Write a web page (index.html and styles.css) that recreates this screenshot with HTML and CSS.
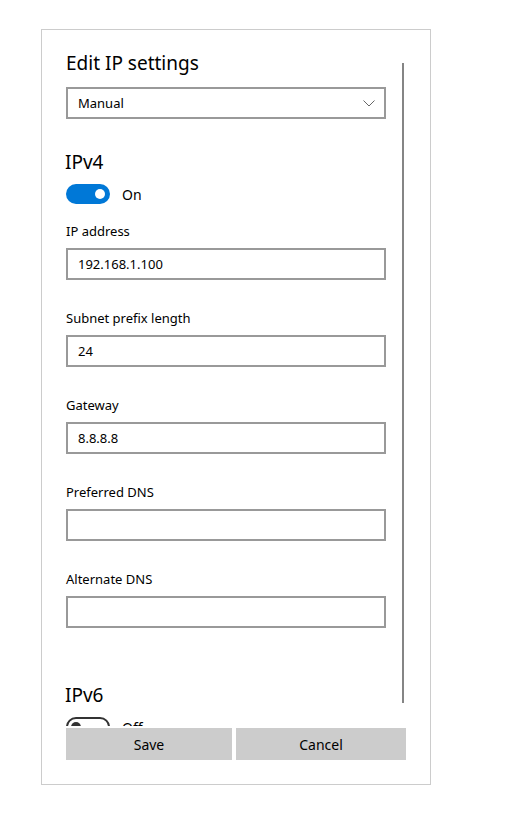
FILE: index.html
```html
<!DOCTYPE html>
<html>
<head>
<meta charset="utf-8">
<link rel="stylesheet" href="styles.css">
</head>
<body>
<div class="dialog">
  <div class="scroll">
    <div class="content">
      <h1 class="title">Edit IP settings</h1>
      <div class="select">
        <span>Manual</span>
        <svg class="chev" width="12" height="7" viewBox="0 0 12 7"><path d="M0.5 0.5 L6 6 L11.5 0.5" fill="none" stroke="#666" stroke-width="1"/></svg>
      </div>
      <h2 class="section">IPv4</h2>
      <div class="toggle-row">
        <span class="toggle on"><span class="knob"></span></span>
        <span class="toggle-label">On</span>
      </div>
      <div class="field">
        <label class="label">IP address</label>
        <div class="input">192.168.1.100</div>
      </div>
      <div class="field">
        <label class="label">Subnet prefix length</label>
        <div class="input">24</div>
      </div>
      <div class="field">
        <label class="label">Gateway</label>
        <div class="input">8.8.8.8</div>
      </div>
      <div class="field">
        <label class="label">Preferred DNS</label>
        <div class="input"></div>
      </div>
      <div class="field">
        <label class="label">Alternate DNS</label>
        <div class="input"></div>
      </div>
      <h2 class="section six">IPv6</h2>
      <div class="toggle-row">
        <span class="toggle off"><span class="knob"></span></span>
        <span class="toggle-label">Off</span>
      </div>
    </div>
    <div class="track"><div class="thumb"></div></div>
  </div>
  <div class="footer">
    <button class="btn save">Save</button>
    <button class="btn cancel">Cancel</button>
  </div>
</div>
</body>
</html>
```
FILE: styles.css
```css
* { box-sizing: border-box; }
html, body { margin: 0; padding: 0; background: #fff; }
body {
  font-family: "Noto Sans", "Open Sans", sans-serif;
  color: #000;
}
.dialog {
  margin: 29px 0 0 41px;
  width: 390px;
  height: 756px;
  border: 1px solid #cccccc;
  display: flex;
  flex-direction: column;
}
.scroll {
  height: 696px;
  overflow: hidden;
  display: flex;
}
.content {
  width: 344px;
  padding-left: 24px;
  flex: none;
}
.track {
  margin-left: 16px;
  padding-top: 33px;
}
.thumb {
  width: 2px;
  height: 640px;
  background: #858585;
}
.title {
  font-size: 19px;
  font-weight: 400;
  line-height: 28px;
  margin: 19px 0 0 0;
}
.select {
  margin-top: 10px;
  height: 32px;
  width: 320px;
  border: 2px solid #999999;
  display: flex;
  align-items: center;
  justify-content: space-between;
  padding: 0 9px 0 10px;
  font-size: 13px;
}
.chev { display: block; }
.section {
  font-size: 19px;
  font-weight: 400;
  line-height: 26px;
  margin: 30px 0 0 -1px;
}
.section.six { margin-top: 54px; }
.toggle-row {
  display: flex;
  align-items: center;
  margin-top: 9px;
  height: 20px;
}
.toggle {
  width: 44px;
  height: 20px;
  border-radius: 10px;
  position: relative;
  flex: none;
}
.toggle.on { background: #0078d7; }
.toggle.off { border: 2px solid #333; }
.knob {
  position: absolute;
  width: 10px;
  height: 10px;
  border-radius: 50%;
  top: 5px;
}
.toggle.on .knob { background: #fff; right: 5px; }
.toggle.off .knob { background: #333; left: 3px; top: 3px; }
.toggle-label {
  margin-left: 12px;
  font-size: 14px;
}
.field { margin-top: 18px; }
.field + .field { margin-top: 29px; }
.label {
  display: block;
  font-size: 13px;
  line-height: 18px;
  margin-bottom: 8px;
}
.input {
  height: 32px;
  width: 320px;
  border: 2px solid #999999;
  font-size: 13px;
  line-height: 28px;
  padding-left: 10px;
}
.footer {
  margin-top: 2px;
  padding-left: 24px;
  display: grid;
  grid-template-columns: 166px 170px;
  column-gap: 4px;
}
.btn {
  height: 32px;
  border: 0;
  background: #cccccc;
  font-family: "Noto Sans", "Open Sans", sans-serif;
  font-size: 14px;
  color: #000;
  padding: 0;
}
```
